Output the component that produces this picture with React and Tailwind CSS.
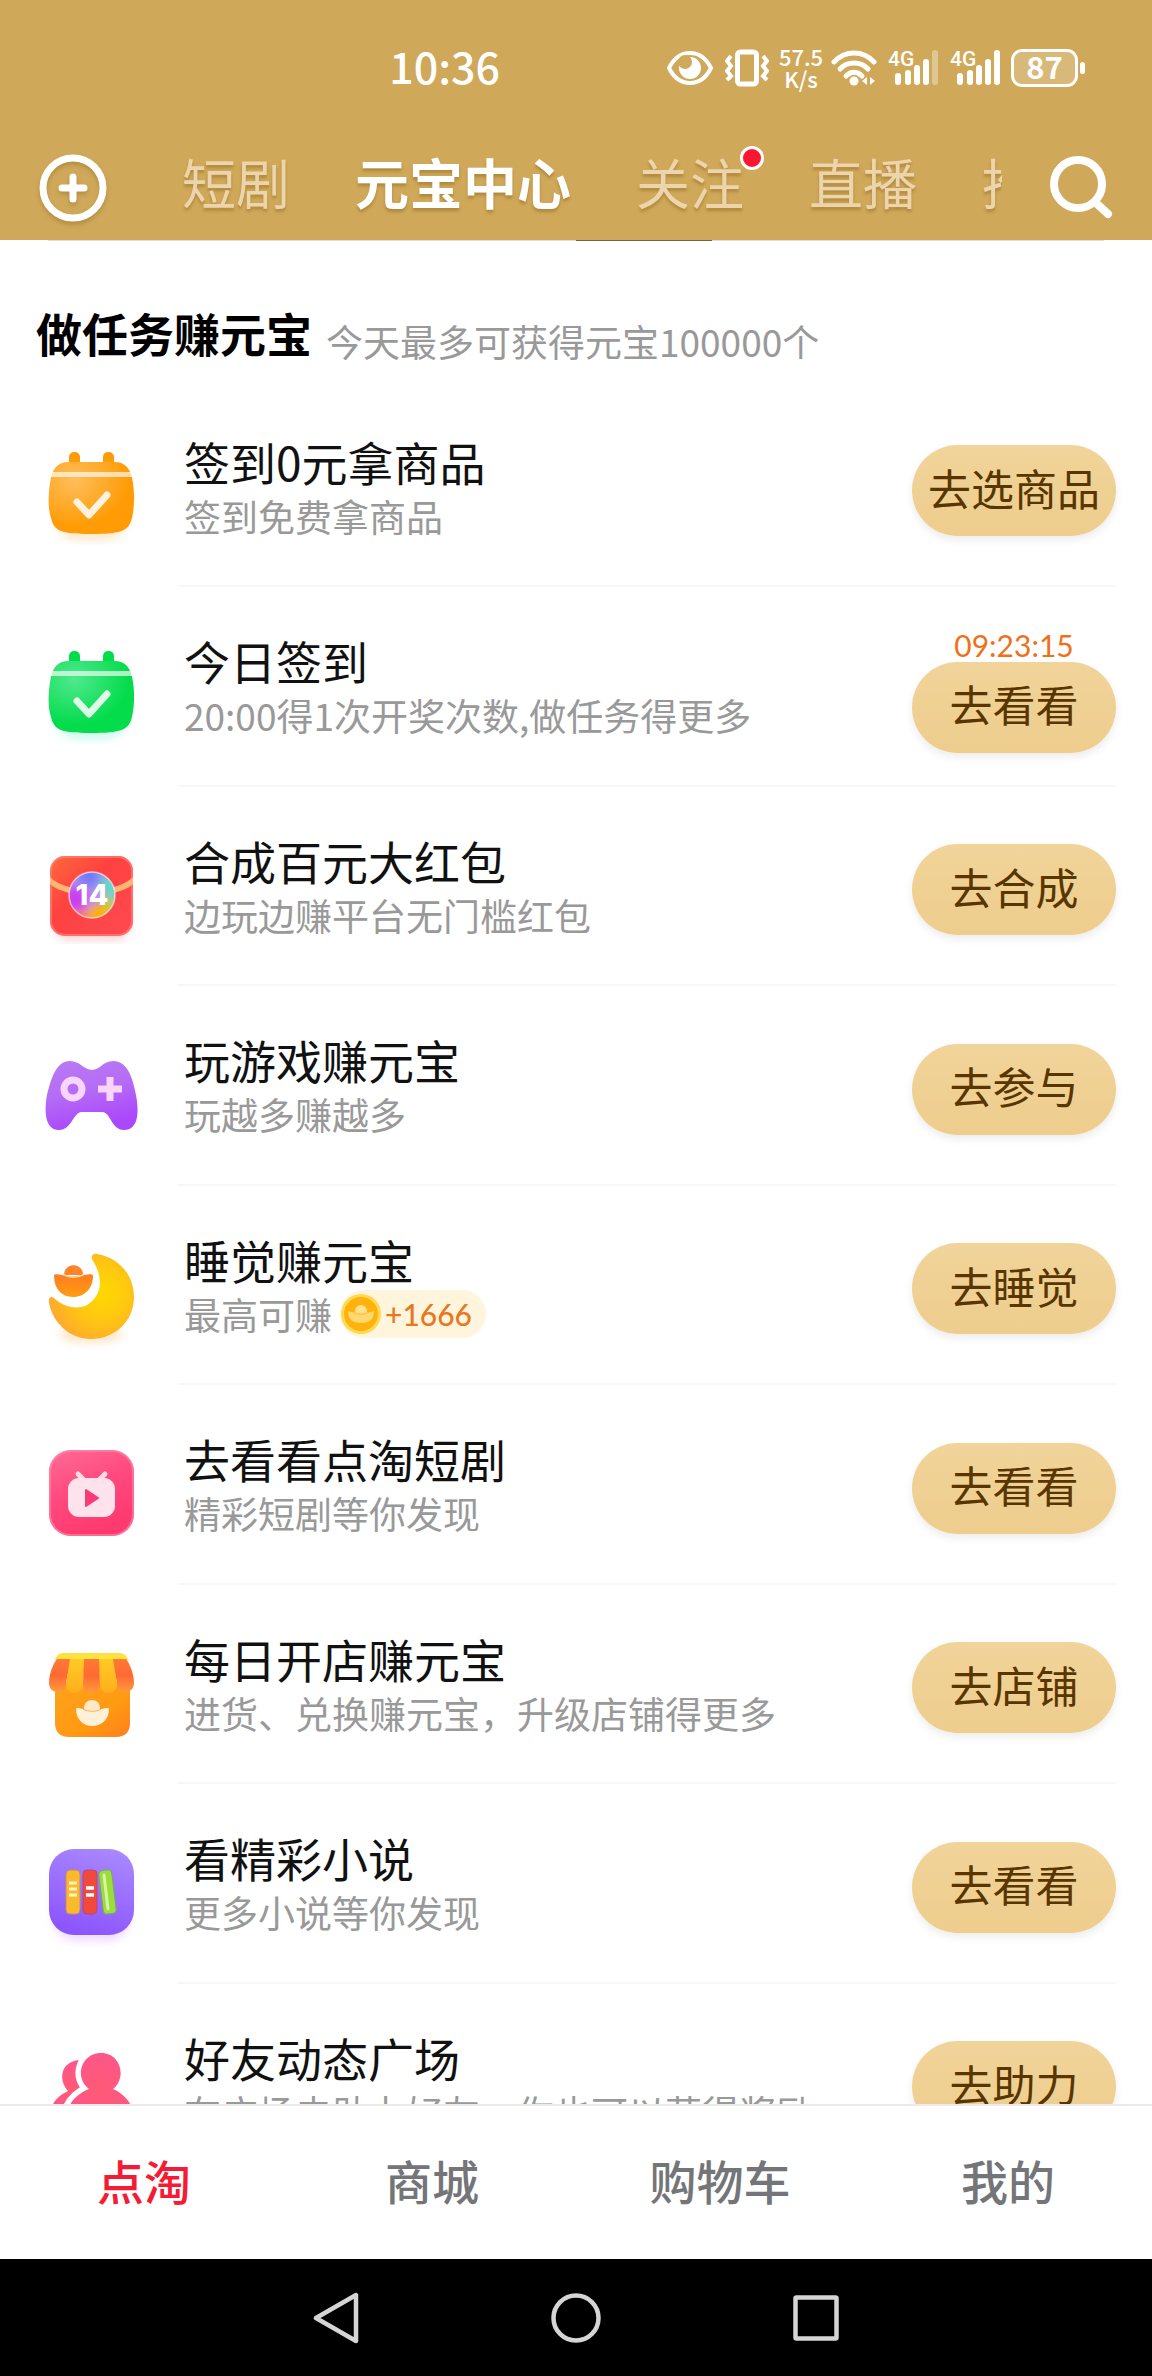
const tabs = [
  { label: '短剧' },
  { label: '元宝中心', active: true },
  { label: '关注', dot: true },
  { label: '直播' },
  { label: '推荐' },
];

const tasks = [
  { icon: OrangeCalendarIcon, title: '签到0元拿商品', desc: '签到免费拿商品', action: '去选商品' },
  { icon: GreenCalendarIcon, title: '今日签到', desc: '20:00得1次开奖次数,做任务得更多', action: '去看看', timer: '09:23:15' },
  { icon: RedPacketIcon, title: '合成百元大红包', desc: '边玩边赚平台无门槛红包', action: '去合成' },
  { icon: GamepadIcon, title: '玩游戏赚元宝', desc: '玩越多赚越多', action: '去参与' },
  { icon: MoonIcon, title: '睡觉赚元宝', desc: '最高可赚', action: '去睡觉', reward: '+1666' },
  { icon: TvIcon, title: '去看看点淘短剧', desc: '精彩短剧等你发现', action: '去看看' },
  { icon: ShopIcon, title: '每日开店赚元宝', desc: '进货、兑换赚元宝，升级店铺得更多', action: '去店铺' },
  { icon: BooksIcon, title: '看精彩小说', desc: '更多小说等你发现', action: '去看看' },
  { icon: FriendsIcon, title: '好友动态广场', desc: '在广场去助力好友，你也可以获得奖励', action: '去助力' },
];

const navItems = ['点淘', '商城', '购物车', '我的'];

function CalendarIcon({ id, light, main, shadow }) {
  return (
    <svg viewBox="0 0 100 100" className="size-[100px]" aria-hidden="true">
      <defs>
        <radialGradient id={id} cx="0.3" cy="0.25" r="0.8">
          <stop offset="0" stopColor={light} />
          <stop offset="0.8" stopColor={main} />
        </radialGradient>
        <filter id={`${id}-blur`} x="-20%" y="-20%" width="140%" height="140%">
          <feGaussianBlur stdDeviation="4" />
        </filter>
      </defs>
      <rect x="14" y="30" width="73" height="66" rx="24" fill={shadow} opacity="0.35" filter={`url(#${id}-blur)`} />
      <rect x="28" y="7" width="11" height="18" rx="5" fill={main} />
      <rect x="62" y="7" width="11" height="18" rx="5" fill={main} />
      <path
        d="M28 17H73C85 17 90 24 92 38C94 52 93 64 91 73C88 86 80 89 50 89C20 89 13 86 10 73C7 64 7 52 9 38C11 24 16 17 28 17Z"
        fill={`url(#${id})`}
      />
      <path d="M11 27H90L92 32H9Z" fill="#fff" opacity="0.65" />
      <path d="M36 57L48 70L66 50" fill="none" stroke="#fff" strokeOpacity="0.85" strokeWidth="7" strokeLinecap="round" strokeLinejoin="round" />
    </svg>
  );
}

function OrangeCalendarIcon() {
  return <CalendarIcon id="cal-orange" light="#ffbe5c" main="#ff9c05" shadow="#ffc27a" />;
}

function GreenCalendarIcon() {
  return <CalendarIcon id="cal-green" light="#4fe98e" main="#04dc4c" shadow="#7df0d0" />;
}

function RedPacketIcon() {
  return (
    <svg viewBox="0 0 100 100" className="size-[100px]" aria-hidden="true">
      <defs>
        <linearGradient id="packet" x1="0" y1="0" x2="1" y2="1">
          <stop offset="0" stopColor="#ff6a3c" />
          <stop offset="0.4" stopColor="#ff4140" />
          <stop offset="1" stopColor="#ff4a52" />
        </linearGradient>
        <clipPath id="ball-clip">
          <circle cx="51" cy="51" r="23" />
        </clipPath>
        <filter id="ball-blur" x="-50%" y="-50%" width="200%" height="200%">
          <feGaussianBlur stdDeviation="5" />
        </filter>
      </defs>
      <rect x="14" y="60" width="74" height="36" rx="14" fill="#ff6a6a" opacity="0.3" filter="url(#ball-blur)" />
      <rect x="9" y="12" width="83" height="80" rx="15" fill="url(#packet)" />
      <rect x="10" y="13" width="81" height="78" rx="14" fill="none" stroke="#ff8078" strokeWidth="2" opacity="0.7" />
      <path d="M9 33C25 50 76 50 92 33V40C76 55 25 55 9 40Z" fill="#ffb574" />
      <g clipPath="url(#ball-clip)">
        <rect x="26" y="27" width="50" height="50" fill="#b98cf0" />
        <g filter="url(#ball-blur)">
          <circle cx="34" cy="56" r="13" fill="#c93cf0" />
          <circle cx="48" cy="32" r="11" fill="#6f7cf5" />
          <circle cx="70" cy="42" r="11" fill="#5fdcc8" />
          <circle cx="70" cy="62" r="9" fill="#b6d63a" />
          <circle cx="58" cy="72" r="12" fill="#ffb300" />
          <circle cx="40" cy="74" r="9" fill="#ff7a5c" />
        </g>
      </g>
      <circle cx="51" cy="51" r="23" fill="none" stroke="#fff" strokeWidth="1.5" opacity="0.6" />
      <text x="51" y="61" textAnchor="middle" fontFamily="Inter, sans-serif" fontSize="29" fontWeight="800" fill="#fff">
        14
      </text>
    </svg>
  );
}

function GamepadIcon() {
  return (
    <svg viewBox="0 0 100 100" className="size-[100px]" aria-hidden="true">
      <defs>
        <linearGradient id="pad" x1="0" y1="0" x2="0.3" y2="1">
          <stop offset="0" stopColor="#b87bf2" />
          <stop offset="0.5" stopColor="#b56cf6" />
          <stop offset="1" stopColor="#ab48fb" />
        </linearGradient>
      </defs>
      <path
        d="M29 18C39 18 43 27 51 27C59 27 62 18 72 18C87 18 92 36 95 52C98 68 98 87 83 87C70 87 70 69 61 69H41C32 69 31 87 18 87C4 87 3 68 6 52C10 36 15 18 29 18Z"
        fill="url(#pad)"
      />
      <circle cx="32" cy="46" r="9" fill="none" stroke="#f8d5fb" strokeWidth="7" />
      <path d="M69 34V58M57 46H81" stroke="#f8d5fb" strokeWidth="7" />
    </svg>
  );
}

function MoonIcon() {
  return (
    <svg viewBox="0 0 100 100" className="size-[100px] overflow-visible" aria-hidden="true">
      <defs>
        <radialGradient id="moon" cx="0.62" cy="0.45" r="0.6">
          <stop offset="0" stopColor="#ffd800" />
          <stop offset="0.5" stopColor="#ffc90f" />
          <stop offset="1" stopColor="#ffac2b" />
        </radialGradient>
        <linearGradient id="moon-ingot" x1="0" y1="0" x2="0" y2="1">
          <stop offset="0" stopColor="#ff7d22" />
          <stop offset="1" stopColor="#ff9d12" />
        </linearGradient>
        <filter id="moon-blur" x="-20%" y="-50%" width="140%" height="200%">
          <feGaussianBlur stdDeviation="4" />
        </filter>
      </defs>
      <ellipse cx="50" cy="92" rx="32" ry="8" fill="#ffc27a" opacity="0.4" filter="url(#moon-blur)" />
      <path
        d="M56 11C80 15 93 34 93 54C93 78 74 96 50 96C30 96 12 81 8 60C7 53 11 53 14 56C24 65 41 68 50 59C62 49 61 32 52 18C49 13 52 10 56 11Z"
        fill="url(#moon)"
      />
      <path d="M23 32C23 19 42 19 42 32Z" fill="#ff8428" />
      <path d="M13 33C13 29 20 33 32 33C44 33 52 29 52 33C52 45 44 54 32 54C20 54 13 45 13 33Z" fill="url(#moon-ingot)" />
      <path d="M22 31C27 35 38 35 43 31" fill="none" stroke="#ffe0a8" strokeWidth="1.5" />
    </svg>
  );
}

function TvIcon() {
  return (
    <svg viewBox="0 0 100 100" className="size-[100px]" aria-hidden="true">
      <defs>
        <linearGradient id="tv" x1="0" y1="0" x2="0.4" y2="1">
          <stop offset="0" stopColor="#ff6d96" />
          <stop offset="0.5" stopColor="#ff4a80" />
          <stop offset="1" stopColor="#ff3a70" />
        </linearGradient>
      </defs>
      <rect x="8" y="8" width="85" height="86" rx="22" fill="url(#tv)" />
      <rect x="9" y="9" width="83" height="84" rx="21" fill="none" stroke="#ff8cab" strokeWidth="2" opacity="0.6" />
      <path d="M37 32L43 38M64 32L58 38" stroke="#ffd9e4" strokeWidth="5" strokeLinecap="round" />
      <rect x="27" y="36" width="47" height="39" rx="11" fill="#ffe3ec" />
      <path d="M45 48V64L57 56Z" fill="#f93c78" stroke="#f93c78" strokeWidth="2" strokeLinejoin="round" />
    </svg>
  );
}

function ShopIcon() {
  return (
    <svg viewBox="0 0 100 100" className="size-[100px]" aria-hidden="true">
      <defs>
        <linearGradient id="shop" x1="0" y1="0" x2="1" y2="1">
          <stop offset="0" stopColor="#ffa21c" />
          <stop offset="0.6" stopColor="#ff9a12" />
          <stop offset="1" stopColor="#ff7f1c" />
        </linearGradient>
        <linearGradient id="stripe-red" x1="0" y1="0" x2="0" y2="1">
          <stop offset="0" stopColor="#ff7a35" />
          <stop offset="0.5" stopColor="#ff6a33" />
          <stop offset="1" stopColor="#ff9a3c" />
        </linearGradient>
        <linearGradient id="stripe-yellow" x1="0" y1="0" x2="0" y2="1">
          <stop offset="0" stopColor="#ffcb25" />
          <stop offset="1" stopColor="#ffae1c" />
        </linearGradient>
      </defs>
      <path d="M14 40H89V81C89 90 84 95 75 95H28C19 95 14 90 14 81Z" fill="url(#shop)" />
      <path d="M22 11H79C83 11 86 14 87 18H14C15 14 18 11 22 11Z" fill="#ffe23f" />
      <path d="M16 17H30L25 41C25 53 8 53 8 41C8 32 12 22 16 17Z" fill="url(#stripe-red)" />
      <path d="M85 17H71L76 41C76 53 93 53 93 41C93 32 89 22 85 17Z" fill="url(#stripe-red)" />
      <path d="M29 17H44L42 42C42 54 25 54 25 42Z" fill="url(#stripe-yellow)" />
      <path d="M72 17H57L59 42C59 54 76 54 76 42Z" fill="url(#stripe-yellow)" />
      <path d="M43 17H58L59 42C59 54 42 54 42 42Z" fill="url(#stripe-red)" />
      <circle cx="51" cy="66" r="8" fill="#ffe9c9" />
      <path d="M35 67C35 64 42 68 51 68C60 68 68 64 68 67C68 77 61 84 51 84C42 84 35 77 35 67Z" fill="#fff0d8" />
      <path d="M42 67C47 70 56 70 60 67" fill="none" stroke="#ffab4a" strokeWidth="1" />
    </svg>
  );
}

function BooksIcon() {
  return (
    <svg viewBox="0 0 100 100" className="size-[100px] overflow-visible" aria-hidden="true">
      <defs>
        <linearGradient id="books" x1="0.7" y1="0" x2="0.4" y2="1">
          <stop offset="0" stopColor="#a888ff" />
          <stop offset="1" stopColor="#8c54fb" />
        </linearGradient>
        <filter id="books-blur" x="-20%" y="-20%" width="140%" height="140%">
          <feGaussianBlur stdDeviation="4" />
        </filter>
      </defs>
      <rect x="12" y="20" width="77" height="80" rx="22" fill="#d9a5ff" opacity="0.4" filter="url(#books-blur)" />
      <rect x="8" y="8" width="85" height="86" rx="25" fill="url(#books)" />
      <rect x="25" y="29" width="14" height="44" rx="4" fill="#fbb92c" stroke="#c98a6a" strokeWidth="1" />
      <path d="M28 42H36M28 48H36M28 54H36" stroke="#fff3c0" strokeWidth="3" />
      <rect x="42" y="29" width="14" height="44" rx="4" fill="#f2493d" stroke="#b04a78" strokeWidth="1" />
      <path d="M45 47H53M45 54H53" stroke="#fff" strokeWidth="3.5" />
      <rect x="60" y="29" width="13" height="44" rx="4" fill="#9add3c" stroke="#7aa668" strokeWidth="1" transform="rotate(-7 66 51)" />
      <path d="M63 34L67 68" stroke="#d8f5a0" strokeWidth="3" strokeLinecap="round" />
    </svg>
  );
}

function FriendsIcon() {
  return (
    <svg viewBox="0 0 100 100" className="size-[100px]" aria-hidden="true">
      <defs>
        <radialGradient id="friend" cx="0.5" cy="0.5" r="0.6">
          <stop offset="0" stopColor="#ff5a74" />
          <stop offset="1" stopColor="#ff5590" />
        </radialGradient>
      </defs>
      <path d="M8 78C9 62 17 55 27 50C17 40 19 20 39 19L48 50L30 78Z" fill="url(#friend)" />
      <path
        d="M48 48C33 37 40 12 60 12C80 12 86 37 72 48C86 54 94 66 94 84H24C24 66 33 54 48 48Z"
        fill="url(#friend)"
        stroke="#fff"
        strokeWidth="11"
        paintOrder="stroke"
      />
    </svg>
  );
}

function CoinIcon() {
  return (
    <svg viewBox="0 0 42 42" className="size-[42px]" aria-hidden="true">
      <circle cx="21" cy="21" r="20" fill="#ffd94f" />
      <circle cx="21" cy="21" r="17" fill="#ffb20d" />
      <circle cx="21" cy="18" r="6" fill="#ffe28a" />
      <path d="M8 18C12 20 30 20 34 18C34 26 30 30 21 30C12 30 8 26 8 18Z" fill="#ffd970" />
      <path d="M13 19C17 22 25 22 29 19" fill="none" stroke="#ffb93a" strokeWidth="1" />
    </svg>
  );
}

function SignalIcon({ weak }) {
  return (
    <svg viewBox="0 0 52 38" className="h-[38px] w-[52px] overflow-visible" fill="#fff" aria-hidden="true">
      <text x="0" y="17" fontFamily="Roboto, sans-serif" fontSize="21" fontWeight="500">4G</text>
      <rect x="7" y="24" width="6" height="12" rx="3" />
      <rect x="17" y="21" width="6" height="15" rx="3" />
      <rect x="26" y="16" width="6" height="20" rx="3" />
      <rect x="35" y="10" width="6" height="26" rx="3" />
      <rect x="44" y="1" width="6" height="35" rx="3" opacity={weak ? 0.35 : 1} />
    </svg>
  );
}

function StatusBar() {
  return (
    <div className="flex h-[136px] items-center justify-end pr-[67px] text-white">
      <time className="mr-[166px] pb-1.5 text-[43px] leading-[50px] font-medium">10:36</time>
      <svg viewBox="0 0 48 38" className="h-[38px] w-12" aria-hidden="true">
        <path d="M3 19C13 -1 35 -1 45 19C35 39 13 39 3 19Z" fill="none" stroke="#fff" strokeWidth="4" strokeLinejoin="round" />
        <circle cx="24" cy="19" r="11" fill="#fff" />
        <circle cx="19" cy="13" r="7" fill="#d0a95a" />
      </svg>
      <svg viewBox="0 0 44 38" className="ml-[11px] h-[38px] w-11" fill="none" stroke="#fff" strokeWidth="4" aria-hidden="true">
        <rect x="12.5" y="3" width="19" height="32" rx="3" strokeWidth="5" />
        <path d="M6 7L2 12L6 17L2 22L6 27L2 31M38 7L42 12L38 17L42 22L38 27L42 31" />
      </svg>
      <div className="ml-[9px] w-[46px] pb-0.5 text-center text-[22px] leading-[22px] font-medium">
        <div>57.5</div>
        <div>K/s</div>
      </div>
      <svg viewBox="0 0 46 38" className="ml-[7px] h-[38px] w-[46px]" fill="none" stroke="#fff" strokeWidth="5" strokeLinecap="round" aria-hidden="true">
        <path d="M3 13C14 1 32 1 43 13" />
        <path d="M9 20C16 12 30 12 37 20" />
        <path d="M15 27C20 22 26 22 31 27" />
        <circle cx="23" cy="32" r="4.5" fill="#fff" stroke="none" />
        <path d="M36 28V36L31 32ZM39 28V36L44 32Z" fill="#fff" stroke="none" />
      </svg>
      <div className="ml-[11px] flex gap-[10px]">
        <SignalIcon weak />
        <SignalIcon />
      </div>
      <div className="ml-[9px] flex items-center gap-[2px]">
        <div className="flex h-[38px] w-[67px] items-center justify-center rounded-[11px] border-3 border-white bg-white/20 pb-1 text-[31px] leading-[32px] font-bold">
          87
        </div>
        <div className="h-3 w-[5px] rounded-sm bg-white" />
      </div>
    </div>
  );
}

function TopTabs() {
  return (
    <div className="flex h-[104px] items-center pr-[36px] pl-[38px]">
      <button type="button" aria-label="发布" className="drop-shadow-[0_3px_2px_rgba(120,80,10,0.3)]">
        <svg viewBox="0 0 70 70" className="size-[70px]" fill="none" stroke="#fff" aria-hidden="true">
          <circle cx="35" cy="35" r="30" strokeWidth="7" />
          <path d="M35 24V46M24 35H46" strokeWidth="7" strokeLinecap="round" />
        </svg>
      </button>
      <nav className="mb-3 ml-[74px] flex min-w-0 flex-1 gap-[65px] overflow-hidden text-[54px] leading-[80px] whitespace-nowrap text-shadow-[0_3px_3px_rgba(120,80,10,0.35)]">
        {tabs.map((tab) => (
          <a key={tab.label} href="#" className={tab.active ? 'relative font-bold text-white' : 'relative text-[#ecd5ac]'}>
            {tab.label}
            {tab.dot && (
              <span className="absolute top-1 -right-5 size-6 rounded-full border-3 border-white bg-[#fb1632]" />
            )}
          </a>
        ))}
      </nav>
      <button type="button" aria-label="搜索" className="ml-[46px]">
        <svg viewBox="0 0 68 68" className="size-[68px]" fill="none" stroke="#fff" strokeLinecap="round" aria-hidden="true">
          <circle cx="30" cy="30" r="24" strokeWidth="8" />
          <path d="M47 48L60 60" strokeWidth="8" />
        </svg>
      </button>
    </div>
  );
}

function TaskRow({ task }) {
  const Icon = task.icon;
  return (
    <li className="flex min-h-[199px] even:min-h-[200px]">
      <div className="flex w-[178px] shrink-0 items-center pt-[14px] pl-[41px]">
        <Icon />
      </div>
      <div className="mr-9 flex min-w-0 flex-1 items-center justify-between border-b-2 border-[#f7f7f7] pl-[6px]">
        <div className="whitespace-nowrap">
          <h3 className="text-[46px] leading-[58px] text-[#111]">{task.title}</h3>
          <div className="flex items-center text-[37px] leading-[52px] text-[#999]">
            <p>{task.desc}</p>
            {task.reward && (
              <span className="ml-2 flex h-12 items-center rounded-full bg-[#fff5dd] pr-[14px] font-[Lato,sans-serif] text-[30px] font-medium text-[#e87722]">
                <CoinIcon />
                <span className="ml-[3px]">{task.reward}</span>
              </span>
            )}
          </div>
        </div>
        <div className="flex flex-col items-center pt-2">
          {task.timer && (
            <time className="font-[Lato,sans-serif] text-[30px] leading-[34px] text-[#f0701a]">{task.timer}</time>
          )}
          <button
            type="button"
            className="h-[91px] w-[204px] rounded-full bg-linear-to-b from-[#f1d49a] to-[#eecd8d] pb-2 text-[43px] leading-[60px] text-[#593600] shadow-[0_4px_8px_rgba(0,0,0,0.08)]"
          >
            {task.action}
          </button>
        </div>
      </div>
    </li>
  );
}

function BottomNav() {
  return (
    <nav className="flex h-[155px] border-t-2 border-[#ebebeb] bg-white text-[47px] font-medium">
      {navItems.map((item, i) => (
        <a
          key={item}
          href="#"
          className={`flex flex-1 items-center justify-center pb-1 ${i === 0 ? 'text-[#f61b35]' : 'text-[#747578]'}`}
        >
          {item}
        </a>
      ))}
    </nav>
  );
}

function SystemKeys() {
  return (
    <div className="flex h-[117px] items-center justify-center gap-[188px] bg-black">
      <button type="button" aria-label="返回">
        <svg viewBox="0 0 52 52" className="size-[52px]" fill="none" stroke="#d5d5d5" strokeWidth="4.5" strokeLinejoin="round" aria-hidden="true">
          <path d="M46 3V49L6 26Z" />
        </svg>
      </button>
      <button type="button" aria-label="主页">
        <svg viewBox="0 0 52 52" className="size-[52px]" fill="none" stroke="#d5d5d5" strokeWidth="4.5" aria-hidden="true">
          <circle cx="26" cy="26" r="22.5" />
        </svg>
      </button>
      <button type="button" aria-label="最近任务">
        <svg viewBox="0 0 52 52" className="size-[52px]" fill="none" stroke="#d5d5d5" strokeWidth="4.5" strokeLinejoin="round" aria-hidden="true">
          <rect x="5.5" y="5.5" width="41" height="41" rx="1" />
        </svg>
      </button>
    </div>
  );
}

export default function App() {
  return (
    <div className="flex h-screen flex-col overflow-hidden bg-white font-['Noto_Sans_CJK_SC',sans-serif]">
      <header className="shrink-0 bg-[#cfa859]">
        <StatusBar />
        <TopTabs />
      </header>
      <main className="min-h-0 flex-1 overflow-hidden">
        {/* bottom edge of the card scrolled under the header */}
        <div className="mx-12 flex h-px justify-center bg-[#dcdcdc]">
          <div className="ml-[136px] w-[136px] bg-[#5c6b45]" />
        </div>
        <div className="flex items-end gap-[14px] px-9 pt-[61px] pb-[26px]">
          <h2 className="text-[46px] leading-[60px] font-bold text-black">做任务赚元宝</h2>
          <p className="text-[37px] leading-[42px] text-[#999]">今天最多可获得元宝100000个</p>
        </div>
        <ul>
          {tasks.map((task) => (
            <TaskRow key={task.title} task={task} />
          ))}
        </ul>
      </main>
      <footer className="shrink-0">
        <BottomNav />
        <SystemKeys />
      </footer>
    </div>
  );
}
